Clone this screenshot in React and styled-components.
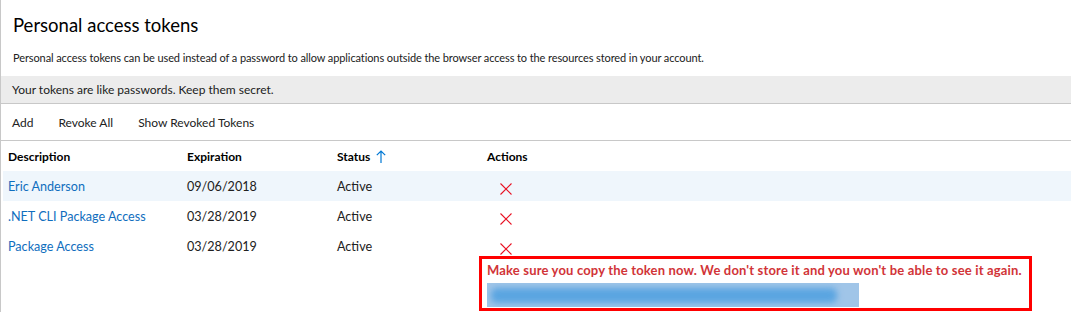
import React from "react";
import styled, { createGlobalStyle } from "styled-components";

const GlobalStyle = createGlobalStyle`
  html, body { margin: 0; padding: 0; background: #ffffff; }
  body {
    font-family: Lato, "Open Sans", "Liberation Sans", sans-serif;
    color: #212121;
    -webkit-font-smoothing: antialiased;
  }
  * { box-sizing: border-box; }
`;

const Page = styled.div`
  height: 312px;
  overflow: hidden;
  border-left: 1px solid #c8c8c8;
  display: flex;
  flex-direction: column;
`;

const Title = styled.h1`
  margin: 11px 0 0 12px;
  font-size: 18.5px;
  line-height: 28px;
  font-weight: 400;
  color: #000;
`;

const Intro = styled.p`
  margin: 11px 0 0 12px;
  font-size: 11px;
  letter-spacing: -0.1px;
  line-height: 16px;
  color: #212121;
`;

const Banner = styled.div`
  margin-top: 10px;
  height: 28px;
  padding-left: 11px;
  display: flex;
  align-items: center;
  background: #ececec;
  border-bottom: 1px solid #c8c8c8;
  font-size: 12px;
  color: #212121;
`;

const Toolbar = styled.div`
  height: 37px;
  display: flex;
  align-items: center;
  gap: 25px;
  padding-left: 11px;
  border-bottom: 1px solid #c8c8c8;
`;

const ToolButton = styled.button`
  border: 0;
  background: none;
  padding: 0;
  font: inherit;
  font-size: 12px;
  color: #212121;
  cursor: pointer;
`;

const Table = styled.div`
  margin-left: 2px;
  display: grid;
  grid-template-columns: 179px 150px 150px 1fr;
`;

const Row = styled.div`
  display: contents;
  & > * {
    background: ${(p) => (p.$selected ? "#eff6fc" : "transparent")};
  }
`;

const HeadCell = styled.div`
  height: 30px;
  padding-left: 5px;
  display: flex;
  align-items: center;
  gap: 6px;
  font-size: 12px;
  font-weight: 700;
  color: #000;
`;

const Cell = styled.div`
  height: 30px;
  padding-left: ${(p) => (p.$icon ? "18px" : "5px")};
  display: flex;
  align-items: center;
  font-size: 12.6px;
  color: ${(p) => (p.$link ? "#106ebe" : "#212121")};
`;

const DeleteIcon = styled.svg`
  width: 12px;
  height: 12px;
  margin-top: 5px;
`;

const Notice = styled.div`
  margin: -5px 0 0 478px;
  width: 553px;
  height: 55px;
  border: 3px solid #ff0000;
  padding: 3px 0 0 5px;
  display: flex;
  flex-direction: column;
  gap: 5px;
`;

const NoticeText = styled.div`
  font-size: 13px;
  letter-spacing: 0.17px;
  line-height: 16px;
  font-weight: 700;
  color: #d13438;
  white-space: nowrap;
`;

const TokenField = styled.div`
  position: relative;
  width: 372px;
  height: 24px;
  background: #a0c5e8;
  overflow: hidden;
`;

const TokenBlur = styled.div`
  position: absolute;
  left: 4px;
  right: 22px;
  top: 5px;
  bottom: 4px;
  background: #5aa5e1;
  filter: blur(3px);
  border-radius: 6px;
`;

const XIcon = () => (
  <DeleteIcon viewBox="0 0 12 12">
    <path d="M0.5 0.5 L11.5 11.5 M11.5 0.5 L0.5 11.5" stroke="#e81123" strokeWidth="1.1" />
  </DeleteIcon>
);

const SortArrow = () => (
  <svg width="10" height="13" viewBox="0 0 10 13">
    <path d="M5 1 V13 M0.8 5.2 L5 1 L9.2 5.2" stroke="#0078d4" strokeWidth="1.2" fill="none" />
  </svg>
);

const tokens = [
  { name: "Eric Anderson", date: "09/06/2018", status: "Active", selected: true },
  { name: ".NET CLI Package Access", date: "03/28/2019", status: "Active" },
  { name: "Package Access", date: "03/28/2019", status: "Active" },
];

export default function App() {
  return (
    <>
      <GlobalStyle />
      <Page>
        <Title>Personal access tokens</Title>
        <Intro>
          Personal access tokens can be used instead of a password to allow applications outside the browser access to the resources stored in your account.
        </Intro>
        <Banner>Your tokens are like passwords. Keep them secret.</Banner>
        <Toolbar>
          <ToolButton>Add</ToolButton>
          <ToolButton>Revoke All</ToolButton>
          <ToolButton>Show Revoked Tokens</ToolButton>
        </Toolbar>
        <Table>
          <HeadCell>Description</HeadCell>
          <HeadCell>Expiration</HeadCell>
          <HeadCell>
            Status <SortArrow />
          </HeadCell>
          <HeadCell>Actions</HeadCell>
          {tokens.map((t) => (
            <Row key={t.name} $selected={t.selected}>
              <Cell $link>{t.name}</Cell>
              <Cell>{t.date}</Cell>
              <Cell>{t.status}</Cell>
              <Cell $icon>
                <XIcon />
              </Cell>
            </Row>
          ))}
        </Table>
        <Notice>
          <NoticeText>
            Make sure you copy the token now. We don't store it and you won't be able to see it again.
          </NoticeText>
          <TokenField>
            <TokenBlur />
          </TokenField>
        </Notice>
      </Page>
    </>
  );
}
